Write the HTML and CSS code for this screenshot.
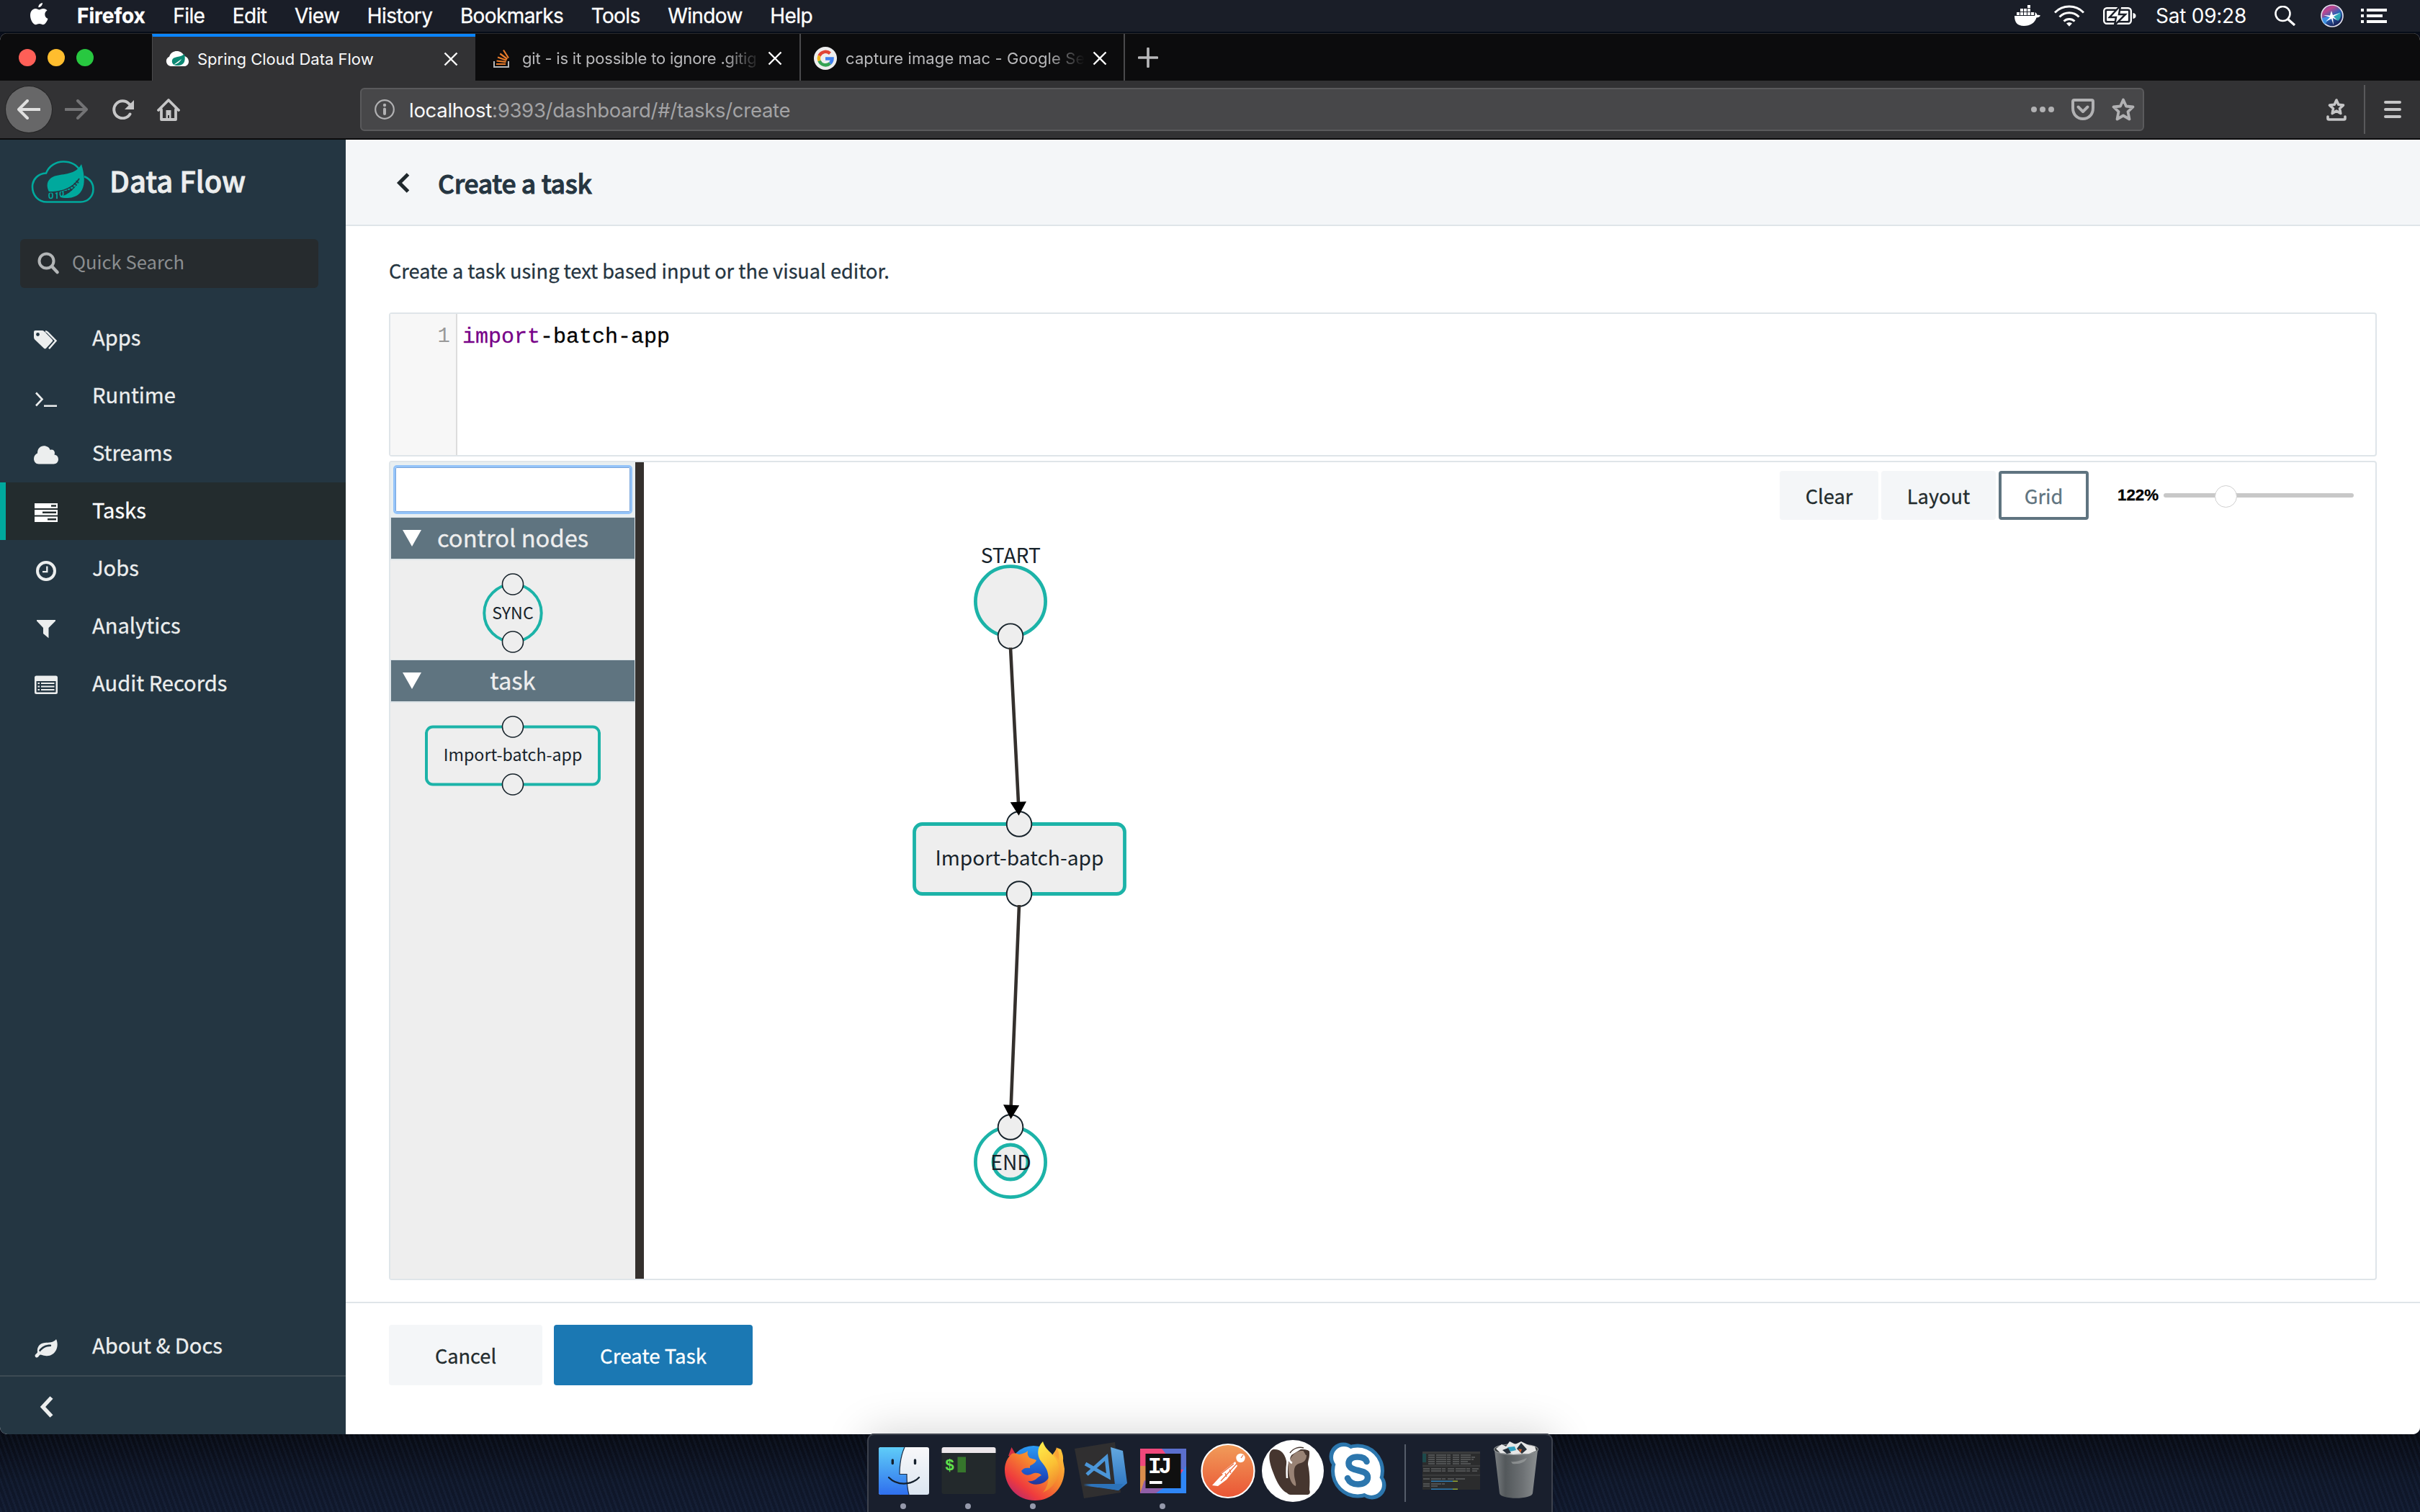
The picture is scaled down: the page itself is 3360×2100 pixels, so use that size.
FILE: index.html
```html
<!DOCTYPE html>
<html lang="en">
<head>
<meta charset="utf-8">
<title>Spring Cloud Data Flow</title>
<link rel="stylesheet" href="styles.css">
</head>
<body>
<header class="menubar">
  <svg class="apple" width="28" height="34" viewBox="0 0 28 34"><path fill="#fff" d="M19 1c.2 3-2.600 6.300-5.600 6.200C13 4.200 16 1.300 19 1zM25.500 11.500c-2 1.300-3.200 3-3.200 5.500 0 2.900 1.700 5 4.200 6-1 3.200-3.700 8.300-6.800 8.300-1.900 0-2.600-1.200-5-1.200s-3.200 1.200-5 1.200C5.800 31.300 2 24 2 18.200 2 12.500 5.500 9 9.300 9c2.200 0 3.800 1.400 5.200 1.400 1.300 0 3.300-1.500 5.900-1.400 2 .1 4 1 5.100 2.500z"/></svg>
  <nav class="menus">
    <b>Firefox</b><span>File</span><span>Edit</span><span>View</span><span>History</span><span>Bookmarks</span><span>Tools</span><span>Window</span><span>Help</span>
  </nav>
  <div class="status">
    <svg class="s-docker" width="36" height="30" viewBox="0 0 36 30"><path fill="#fff" d="M0 15h28c1-1.500.5-4 .3-5 2 .6 3 2.500 3.200 4 1.500-.3 3-.2 4.500.5-1 2-3 3-5.500 3C28 25 22 29 13 29 4 29 0 24 0 15zM3 10h4v4H3zM8 10h4v4H8zM13 10h4v4h-4zM18 10h4v4h-4zM23 10h4v4h-4zM8 5h4v4H8zM13 5h4v4h-4zM18 5h4v4h-4zM18 0h4v4h-4z"/></svg>
    <svg class="s-wifi" width="42" height="30" viewBox="0 0 42 30"><g fill="none" stroke="#fff" stroke-width="3"><path d="M1 10.500a28 28 0 0 1 40 0"/><path d="M7.500 16.500a19 19 0 0 1 27 0"/><path d="M13.500 22.500a11 11 0 0 1 15 0"/></g><path fill="#fff" d="M17 25.500a6 6 0 0 1 8 0l-4 4.300z"/></svg>
    <svg class="s-batt" width="46" height="26" viewBox="0 0 46 26"><rect x="1.200" y="2.200" width="37.600" height="21.600" rx="4" fill="none" stroke="#fff" stroke-width="2.400"/><rect x="5" y="6" width="30" height="14" rx="1" fill="#fff"/><path fill="#fff" d="M41.500 9c3 .5 4 2 4 4s-1 3.500-4 4z"/><path d="M23 0 9 15h9l-2 11 15-15h-9l2-11z" fill="#fff" stroke="#1a1e28" stroke-width="2.500"/></svg>
    <span class="clock">Sat 09:28</span>
    <svg class="s-find" width="30" height="28" viewBox="0 0 30 28"><circle cx="11.500" cy="11" r="10" fill="none" stroke="#fff" stroke-width="2.600"/><path d="M18.500 18.500 28 27" stroke="#fff" stroke-width="3.200"/></svg>
    <svg class="s-siri" width="32" height="32" viewBox="0 0 32 32"><defs><linearGradient id="siri" x1="0" y1="0" x2=".6" y2="1"><stop offset="0" stop-color="#6b4bb0"/><stop offset=".3" stop-color="#c0468e"/><stop offset=".6" stop-color="#2a62b8"/><stop offset="1" stop-color="#171d50"/></linearGradient></defs><circle cx="16" cy="16" r="15" fill="url(#siri)" stroke="#e4e2ee" stroke-width="1.600"/><path fill="#2fc4c0" opacity=".75" d="M16 17 27 11c2 5 0 10-3 12z"/><path fill="#3c9ef0" d="m15 16-9 12c-3-3-4-6-4-9z" opacity=".75"/><path fill="#fff" d="m15 9 2 6 10-3-9 5 5 5-6-3 1 10-3-9-8 4 6-6-9-3 9 .5z"/></svg>
    <svg class="s-list" width="36" height="20" viewBox="0 0 36 20"><path fill="#fff" d="M0 0h4v4H0zM8 0h28v4H8zM0 8h4v4H0zM8 8h22v4H8zM0 16h4v4H0zM8 16h28v4H8z"/></svg>
  </div>
</header>

<div class="window">
  <div class="tabs">
    <div class="lights"><i class="red"></i><i class="yellow"></i><i class="green"></i></div>
    <div class="tab active">
      <svg class="fav" width="32" height="22" viewBox="0 0 32 22"><path fill="#fff" d="M7 21a7 7 0 0 1-2-13.300C7 2 11 0 15.500 0 20 0 24 2.500 25.500 6.500 30 8 32 11 32 14.500c0 4-3 6.500-6 6.500z"/><path fill="#0b8873" d="M26 4c2 9 0 15.500-8 16-7 .5-10-3-9-7.500C10 7 21 9 26 4zM11 19c5-1 9-4 11-8"/></svg>
      <span class="title">Spring Cloud Data Flow</span>
      <svg class="x" width="20" height="20" viewBox="0 0 20 20"><path d="m1.500 1.500 17 17m0-17-17 17"/></svg>
    </div>
    <div class="tab git">
      <svg class="fav" width="22" height="26" viewBox="0 0 22 26"><path fill="none" stroke="#b5b7b9" stroke-width="2" d="M1 17v8h20v-8"/><path stroke="#e87b2a" stroke-width="2.200" d="M4 21h13M4.500 16.500l13 1.600M6 11.500l12.300 4.200M9.300 6.500l10 7.500M14 1.500l7 11"/></svg>
      <span class="title">git - is it possible to ignore .gitig</span>
      <svg class="x" width="20" height="20" viewBox="0 0 20 20"><path d="m1.500 1.500 17 17m0-17-17 17"/></svg>
    </div>
    <div class="tab goog">
      <svg class="fav" width="32" height="32" viewBox="0 0 32 32"><circle cx="16" cy="16" r="16" fill="#eee"/><g fill="none" stroke-width="4.500"><path stroke="#e04435" d="M7.500 12.500A9.500 9.500 0 0 1 22.500 9.300"/><path stroke="#efb31a" d="M7.500 19.500a9.500 9.500 0 0 1 0-7"/><path stroke="#34a353" d="M22.500 23a9.500 9.500 0 0 1-15-3.500"/><path stroke="#4080ee" d="M22.500 23a9 9 0 0 0 3-6.500H16"/></g></svg>
      <span class="title">capture image mac - Google Se</span>
      <svg class="x" width="20" height="20" viewBox="0 0 20 20"><path d="m1.500 1.500 17 17m0-17-17 17"/></svg>
    </div>
    <svg class="plus" width="28" height="28" viewBox="0 0 28 28"><path d="M14 1.500v25M1.500 14h25"/></svg>
  </div>

  <div class="toolbar">
    <span class="back"><svg width="32" height="28" viewBox="0 0 32 28"><path d="M31 14H3M14 2 2 14l12 12"/></svg></span>
    <svg class="fwd" width="32" height="28" viewBox="0 0 32 28"><path d="M1 14h28M18 2l12 12-12 12"/></svg>
    <svg class="reload" width="31" height="28" viewBox="0 0 31 28"><path fill="none" stroke="#c6c6c7" stroke-width="4" stroke-linecap="round" d="M24.500 20.500A12 12 0 1 1 23 6l4 4"/><path fill="#c6c6c7" d="M30 1v13H17z"/></svg>
    <svg class="home" width="32" height="32" viewBox="0 0 32 32"><path fill="none" stroke="#c6c6c7" stroke-width="3.800" stroke-linejoin="round" stroke-linecap="round" d="M2 17 16 3l14 14M6 16v14h20V16"/><path fill="#c6c6c7" d="M12.500 17h7v13h-2.500v-6h-2v6h-2.500z"/></svg>
    <div class="url">
      <svg width="28" height="28" viewBox="0 0 28 28"><circle cx="14" cy="14" r="12.800" fill="none" stroke="#b1b1b3" stroke-width="2.200"/><circle cx="14" cy="8" r="2.200" fill="#b1b1b3"/><path stroke="#b1b1b3" stroke-width="4" stroke-linecap="round" d="M14 13.500v6.500"/></svg>
      <span class="addr"><em>localhost</em>:9393/dashboard/#/tasks/create</span>
      <svg class="dots" width="32" height="8" viewBox="0 0 32 8"><circle cx="4" cy="4" r="4"/><circle cx="16" cy="4" r="4"/><circle cx="28" cy="4" r="4"/></svg>
      <svg class="pocket" width="32" height="30" viewBox="0 0 32 30"><path d="M4 2h24a2 2 0 0 1 2 2v9c0 9-6 15-14 15S2 22 2 13V4a2 2 0 0 1 2-2z"/><path d="m9.500 11.500 6.500 6.500 6.500-6.500"/></svg>
      <svg class="star" width="32" height="32" viewBox="0 0 32 32"><path d="m16 2.500 4 9 9.500 1-7 6.700 2 10.300-8.500-5-8.500 5 2-10.300-7-6.700 9.500-1z"/></svg>
    </div>
    <svg class="lib" width="28" height="32" viewBox="0 0 28 32"><path d="m14 3 2.800 6.300 6.700.8-5 4.600 1.300 6.800-5.800-3.400-5.800 3.400 1.300-6.800-5-4.600 6.700-.8z"/><path d="M2 26v2.500a1.500 1.500 0 0 0 1.500 1.500h21a1.500 1.500 0 0 0 1.500-1.500V26"/></svg>
    <i class="vsep"></i>
    <svg class="burger" width="24" height="24" viewBox="0 0 24 24"><path d="M2 2h20M2 12h20M2 22h20"/></svg>
  </div>

  <div class="page">
    <aside>
      <div class="brand">
        <svg width="88" height="60" viewBox="0 0 88 60"><path fill="none" stroke="#00a99d" stroke-width="2.600" d="M22 57.500C10 57.500 2 48 2 36.500 2 26 10 18 21 17.500 25 7 35 1.500 45 1.500c11 0 19 5 23.500 13M74 22c8 3.500 12.500 10 12.500 17.500C86.500 50 79 57.500 69 57.500H20"/><path fill="#00a99d" d="M70 5c7 22 6 46-19 47-4 .2-8-.500-11-1.600 13-3 23-13 28-26C59 37 43 43 25 43 20 34 23 25 33 21.500 45 18 62 20 70 5z"/><path fill="#00a99d" d="M24 40c17 0 34-5 44-16-2 6-5 10-9 14-9 5-20 6-34 5z"/><g fill="none" stroke="#00a99d" stroke-width="1.700"><ellipse cx="27.500" cy="48.500" rx="2.500" ry="4"/><path d="m34 46 2-1v8"/><ellipse cx="42.500" cy="46" rx="2.200" ry="3.800"/></g><path fill="none" stroke="#243642" stroke-width="1.500" d="M24 44c19 0 34-5 43-19"/><path fill="none" stroke="#243642" stroke-width="5" stroke-dasharray="1.500 3" d="M47 45c8-4 14-11 18-16"/></svg>
        <h1>Data Flow</h1>
      </div>
      <div class="search"><svg width="32" height="32" viewBox="0 0 32 32"><circle cx="12.500" cy="12.500" r="10" fill="none" stroke="#b3b6b7" stroke-width="4"/><path stroke="#b3b6b7" stroke-width="4.600" stroke-linecap="round" d="m20 20 7.500 8"/></svg><span>Quick Search</span></div>
      <nav class="side">
        <a><svg width="36" height="36" viewBox="0 0 36 36"><path fill="#eceeee" d="M1 9a2 2 0 0 1 2-2h9c1.500 0 3 .7 4 1.700L26.500 19.500c1 1 1 2 0 3L18 31.700c-1 1-2 1-3 0L2.700 20C1.600 19 1 17.700 1 16z"/><circle cx="6.500" cy="12.500" r="2.400" fill="#243642"/><path fill="none" stroke="#eceeee" stroke-width="2.500" d="M17 8.200c1 0 2 .5 3 1.500l11.500 11.500-9.500 11"/></svg><span>Apps</span></a>
        <a><svg width="36" height="36" viewBox="0 0 36 36"><path fill="none" stroke="#eceeee" stroke-width="2.600" d="m4 13.500 8.500 9L4 31.500"/><path fill="#eceeee" d="M15 30.500h18v2.500H15z"/></svg><span>Runtime</span></a>
        <a><svg width="36" height="36" viewBox="0 0 36 36"><path fill="#eceeee" d="M8 32.500c-4.500 0-7-3.500-7-7.500 0-3.500 2-6.300 5-7.500C6 11 10 7.300 15 7.300c4 0 7.500 2.200 8.700 5.700 3-1.500 6.300.5 6.300 4 0 1-.2 1.800-.6 2.600C33 20 35 22.500 35 26c0 3.700-3 6.500-6.500 6.500z"/></svg><span>Streams</span></a>
        <a class="on"><svg width="36" height="36" viewBox="0 0 36 36"><path fill="#fff" d="M2 7h32v7H2zM2 16h32v7.500H2zM2 25.500h32V33H2z"/><path stroke="#232c2e" stroke-width="2.400" d="M25 10.500h7M13 19.800h19M20 29.300h12"/></svg><span>Tasks</span></a>
        <a><svg width="36" height="36" viewBox="0 0 36 36"><circle cx="18" cy="21" r="12" fill="none" stroke="#eceeee" stroke-width="4"/><path fill="none" stroke="#eceeee" stroke-width="2.300" d="M19.300 14.500v7.700H13"/></svg><span>Jobs</span></a>
        <a><svg width="36" height="36" viewBox="0 0 36 36"><path fill="#eceeee" d="M5 9h26v1.500L21.500 20v14.300L14 28v-8L5 10.500z"/></svg><span>Analytics</span></a>
        <a><svg width="36" height="36" viewBox="0 0 36 36"><path fill="#eceeee" fill-rule="evenodd" d="M4.500 6.500h27A2.500 2.500 0 0 1 34 9v20.500a2.500 2.500 0 0 1-2.500 2.500h-27A2.500 2.500 0 0 1 2 29.500V9a2.500 2.500 0 0 1 2.500-2.500zM4.500 14v14.500c0 .6.400 1 1 1h25c.6 0 1-.4 1-1V14z"/><path stroke="#eceeee" stroke-width="2.200" d="M6.500 17h2.500M11 17h18.500M6.500 21.500h2.500M11 21.500h18.500M6.500 26h2.500M11 26h18.500"/></svg><span>Audit Records</span></a>
      </nav>
      <div class="side about"><a><svg width="36" height="36" viewBox="0 0 36 36"><path fill="#eceeee" fill-rule="evenodd" d="M32 8c2 4 2.500 10 0 15-3 6-9 9-15 8-3-.3-5-1.500-7-1.500-1.500 0-2.500 4-5 4C3 33.500 2 31 3 29.500c1-1.200 2.800-2 3-3.500C5 19 9 13.500 16 13c6-.5 12 0 16-5zM9.500 25.500c5-5.500 8-7.300 14.500-7.500 1.600 0 1.600-2.600 0-2.600-7 0-12 2.600-16 8z"/></svg><span>About &amp; Docs</span></a></div>
      <div class="collapse"><svg width="20" height="30" viewBox="0 0 20 30"><path fill="none" stroke="#eceeee" stroke-width="5.500" d="M16.500 2 4.500 15l12 13"/></svg></div>
    </aside>
    <main>
      <div class="head"><svg width="20" height="28" viewBox="0 0 20 28"><path fill="none" stroke="#1f282c" stroke-width="5" d="M16.500 2 4.500 14l12 12"/></svg><h2>Create a task</h2></div>
      <p class="lead">Create a task using text based input or the visual editor.</p>
      <div class="code"><div class="gutter">1</div><pre><span>import</span>-batch-app</pre></div>
      <div class="flo">
        <div class="palette">
          <div class="filter"><div class="field"></div></div>
          <div class="group"><svg width="26" height="23" viewBox="0 0 26 23"><path fill="#fff" d="M0 0h26L13 23z"/></svg><span>control nodes</span></div>
          <svg class="shape" width="340" height="138" viewBox="542 778.500 340 138"><circle cx="712" cy="852" r="39.700" class="node"/><circle cx="712" cy="812" r="14.500" class="port"/><circle cx="712" cy="892" r="14.500" class="port"/><text x="712" y="860.700" class="lbl sm">SYNC</text></svg>
          <div class="group"><svg width="26" height="23" viewBox="0 0 26 23"><path fill="#fff" d="M0 0h26L13 23z"/></svg><span>task</span></div>
          <svg class="shape" width="340" height="138" viewBox="542 976.500 340 138"><rect x="592" y="1010" width="240" height="80" rx="9" class="node"/><circle cx="712" cy="1010" r="14.500" class="port"/><circle cx="712" cy="1090" r="14.500" class="port"/><text x="712" y="1057.700" class="lbl sm">Import-batch-app</text></svg>
        </div>
        <div class="splitter"></div>
        <div class="canvas">
          <svg class="graph" width="1506" height="1134" viewBox="894 642 1506 1134">
            <g class="big"><circle cx="1403" cy="835.300" r="48.600" class="node"/><circle cx="1403" cy="883.700" r="17.300" class="port"/><text x="1403.300" y="782.300" class="lbl">START</text>
            <rect x="1269.500" y="1144.500" width="292" height="97" rx="11" class="node"/><circle cx="1415" cy="1144.500" r="17.300" class="port"/><circle cx="1415" cy="1241.500" r="17.300" class="port"/><text x="1415.500" y="1201.700" class="lbl">Import-batch-app</text>
            <circle cx="1403" cy="1614" r="48.600" class="node hollow"/><circle cx="1403" cy="1614" r="24" class="node"/><circle cx="1403" cy="1565.500" r="17.300" class="port"/><text x="1403.500" y="1624.700" class="lbl">END</text></g>
            <path class="link" d="M1403 899.500 1414 1115M1415 1257 1403.700 1536"/><path d="M1402.700 1114.300 1425 1113.300 1414.500 1132.700zM1393 1534.300 1415.200 1535.300 1403.500 1554.300z"/>
          </svg>
          <div class="tools"><span class="btn clear">Clear</span><span class="btn layout">Layout</span><span class="btn grid">Grid</span><span class="pct">122%</span><span class="slider"><i></i></span></div>
        </div>
      </div>
      <footer><span class="btn cancel">Cancel</span><span class="btn create">Create Task</span></footer>
    </main>
  </div>
</div>

<div class="desk">
  <div class="dock">
    <svg width="952" height="109" viewBox="1204 1991 952 109">
      <defs>
        <linearGradient id="fb" x1="0" y1="0" x2="0" y2="1"><stop offset="0" stop-color="#5fcdf8"/><stop offset="1" stop-color="#2f6fee"/></linearGradient>
        <linearGradient id="fw" x1="0" y1="0" x2="0" y2="1"><stop offset="0" stop-color="#f8f8fa"/><stop offset="1" stop-color="#dbe5f1"/></linearGradient>
        <linearGradient id="ffo" x1="1" y1="0" x2="0.1" y2="1"><stop offset="0" stop-color="#ffcf3a"/><stop offset=".45" stop-color="#f6842e"/><stop offset=".75" stop-color="#ef3b3d"/><stop offset="1" stop-color="#a8217c"/></linearGradient>
        <linearGradient id="ffb" x1="0" y1="0" x2="0" y2="1"><stop offset="0" stop-color="#2b9bf4"/><stop offset=".6" stop-color="#1c50c4"/><stop offset="1" stop-color="#2b1664"/></linearGradient>
        <linearGradient id="ffy" x1="0" y1="0" x2=".3" y2="1"><stop offset="0" stop-color="#fff04c"/><stop offset=".6" stop-color="#fbc034"/><stop offset="1" stop-color="#f28a2f"/></linearGradient>
        <linearGradient id="vs" x1="0" y1="0" x2="0" y2="1"><stop offset="0" stop-color="#63a8df"/><stop offset="1" stop-color="#2a72c0"/></linearGradient>
        <linearGradient id="pm" x1="0" y1="0" x2="0" y2="1"><stop offset="0" stop-color="#f19c5a"/><stop offset="1" stop-color="#ea5535"/></linearGradient>
        <linearGradient id="tr" x1="0" y1="0" x2="1" y2="0"><stop offset="0" stop-color="#7b7f82"/><stop offset=".25" stop-color="#53585b"/><stop offset=".65" stop-color="#6d7174"/><stop offset="1" stop-color="#8b8f91"/></linearGradient>
      </defs>
      <rect x="1220" y="2010" width="70" height="66" rx="3" fill="url(#fw)"/><path fill="url(#fb)" d="M1223 2010h33c-5 11-7 23-7 37.500h10c0 10 .7 20 3 28.500h-39a3 3 0 0 1-3-3v-60a3 3 0 0 1 3-3z"/><path fill="none" stroke="#1b2c44" stroke-width="1.200" d="M1256 2010c-5 11-7 23-7 37.500h10c0 10 .7 20 3 28.500"/><g fill="none" stroke="#14202d" stroke-linecap="round"><path stroke-width="3.400" d="M1239.300 2028v4.500M1270.500 2028v4.500"/><path stroke-width="2.200" d="M1234 2052c11 11.500 31 11.500 42 0"/></g>
      <rect x="1307.500" y="2010" width="75" height="65" rx="3" fill="#23292c"/><path fill="#ece6ea" d="M1310.500 2010h69a3 3 0 0 1 3 3v5h-75v-5a3 3 0 0 1 3-3z"/><text x="1312" y="2042" class="prompt">$</text><rect x="1329.500" y="2023.500" width="11.500" height="21.500" fill="#36762c"/>
      <path fill="#d42f45" d="M1400 2022l4.500-12 8 14z"/><circle cx="1435" cy="2042" r="34" fill="url(#ffb)"/><path fill="url(#ffo)" d="M1405 2019c4-1 7 0 10 1 5-1 9-2 12-5-1 5 0 7 3 10 2 1 5 1 9 3-1 4-6 6-9 8v3c-6-1-9 0-12 4 3 6 9 7 15 4 4-2 10-2 13 2-2 1-4 2-6 4-3 3-8 5-13 4 4 5 13 6 20 3 12-5 14-18 9-32l12-17 5 2c4 10 3 12 3 16l2 11c0 26-17 44-41 44-25 0-42-20-42-43 0-9 4-17 10-22z"/><path fill="url(#ffy)" d="M1448 2002c-6 6-8 13-6 21 2 8 11 12 13 24 2 10-1 19-7 26 14-6 24-20 22-36-2-17-18-20-22-35z"/><path fill="#f9a335" d="M1464 2020l3-10c3 6 4 10 3 18z"/>
      <path fill="#302f30" d="m1492 2012 56-9 8 70-51 8z"/><path fill="url(#vs)" d="m1542 2010 17 5 6 45-12 10-49-7 44-1z"/><path fill="#2c72b8" d="m1504 2061 49 9 6-9z"/><path fill="none" stroke="#4b96d8" stroke-width="5" d="m1507 2033 32 18-3-27-27 24"/>
      <path fill="#f0487b" d="M1583 2012h64v62h-64z"/><path fill="#5b6fce" d="M1613 2012h34v30l-12-2z"/><path fill="#2f86f6" d="M1647 2036v38h-46l30-15z"/><path fill="#d98d4c" d="M1583 2036h10v28l-10 8z"/><path fill="#915fa8" d="m1583 2074 6-18 28 9-12 9z"/><path fill="#101010" d="M1590.500 2019h49v48h-49z"/><text x="1594" y="2046" class="ij">IJ</text><path fill="#fff" d="M1596 2057h17.500v4H1596z"/>
      <ellipse cx="1705" cy="2043" rx="36.500" ry="37" fill="url(#pm)" stroke="#fff" stroke-width="2.200"/><circle cx="1722.500" cy="2025" r="6.200" fill="#fff"/><path fill="#fff" d="m1715 2030 3 6-15 19-12 9-8-1 11-12 4-3-3-2z"/><path stroke="#ec6a40" stroke-width="1.200" d="m1717 2033-22 24m18-24-18 14m12-6 2 5m-8 0 2 5M1723 2025l3-4"/>
      <ellipse cx="1795" cy="2043" rx="43" ry="43" fill="#fff"/><path fill="#46362f" d="M1768 2013c10-1 16 6 18 16 2 12 1 26 2 45-8-3-15-14-20-28-7-17-8-31 0-33z"/><path fill="#46362f" d="M1806 2013c8 0 13 2 12 7 0 6-2 8-2 14 2 9 3 20 2 35 2 5 0 7-4 7h-22c-6 0-7-6-6-14 1-18 0-30 7-41z"/><path fill="#998375" d="M1789 2032c3-9 9-16 17-17 5-.5 8 1 8 6 0 7-4 10-8 11-8 2-10 6-9 18 1 7 3 10 2 14-8-3-11-18-10-32z"/><path fill="#46362f" d="M1809 2014c4-1 8 0 9 2 0 3-2 5-5 5z"/><path fill="none" stroke="#46362f" stroke-width="1.500" d="M1791 2018c5-7 13-9 19-7"/><path fill="none" stroke="#fff" stroke-width="2.500" d="M1791 2021c-4 7-5 18-4 32M1792 2020c-3 5-3 10 2 12"/>
      <circle cx="1865" cy="2023" r="19.500" fill="#2c76ad"/><circle cx="1905" cy="2063" r="19.500" fill="#2c76ad"/><ellipse cx="1885" cy="2043" rx="37" ry="37.500" fill="#2c76ad"/><circle cx="1866" cy="2024" r="15" fill="#fff"/><circle cx="1904" cy="2062" r="15" fill="#fff"/><ellipse cx="1885" cy="2043" rx="32" ry="32.500" fill="#fff"/><path fill="none" stroke="#2c76ad" stroke-width="8.500" stroke-linecap="round" d="M1897.500 2030c-2-6-8-6.500-13-6.500-7 0-12 3.500-12 9 0 13 26.500 6.500 26.500 19.500 0 6-6 9.500-13.500 9.500-8 0-12-3-14.500-8.500"/>
      <path fill="#555c69" d="M1950 2006h2v80h-2z"/>
      <path fill="#2b2c2d" d="M1975 2016h80v53h-80z"/><path fill="#3a3b3c" d="M1975 2016h80v3h-80zM1975 2035h80v2h-80zM1975 2048h80v2h-80z"/><path stroke="#77797a" stroke-width="1.200" stroke-dasharray="9 2 14 1 5 3" d="M1983 2021h60M1983 2024h68M1983 2027h63M1983 2030h55M1983 2033h60M1976 2040h78M1976 2043h75M1976 2054h58M1976 2061h30M1976 2064h20"/><path fill="#1d4a4c" d="M1975 2019h5v12h-5z"/><path fill="#2f7fb8" d="M1987 2056.500h30v1.500h-30zM1987 2067.500h30v1.500h-30z"/><path fill="#93a637" d="M2017 2056.500h7v1.500h-7zM2017 2067.500h7v1.500h-7z"/>
      <path fill="url(#tr)" d="M2075 2014c10 6 50 6 60 0l-7 60c-1 9-45 9-46 0z"/><ellipse cx="2105" cy="2013" rx="30.500" ry="7.500" fill="#35393b" stroke="#8d9193" stroke-width="1.200"/><path fill="#e6e6e6" d="m2077 2012 8-6 6 3 5-7 8 4 8-4 10 5 9 2 2 6-10 4-22 1-18-2z"/><path fill="#33a0c0" d="m2093 2010 10-1 2 5-8 2z"/><path fill="#27303a" d="m2086 2014 8-3 4 7-6 1zM2106 2012l6-8 8 9-7 6z"/><path fill="#c55a2b" d="m2108 2012 5 1-2 5z"/><path fill="#a3a6a7" opacity=".6" d="M2098 2030c8 1 14-2 22-5-2 6-10 9-20 8z"/>
      <g fill="#9599ab"><circle cx="1254" cy="2092" r="4"/><circle cx="1344" cy="2092" r="4"/><circle cx="1434" cy="2092" r="4"/><circle cx="1614" cy="2092" r="4"/></g>
    </svg>
  </div>
</div>
</body>
</html>
```

FILE: styles.css
```css
* { box-sizing: border-box; }
html, body { margin: 0; width: 3360px; height: 2100px; overflow: hidden; }
body { display: flex; flex-direction: column; background: #0a0e1a; font-family: "Noto Sans CJK SC", "Open Sans", sans-serif; }
svg { display: block; flex: none; }

.menubar { height: 46px; flex: none; display: flex; align-items: center; padding: 0 46px 2px 40px; color: #fff; font: 28px/44px Inter, sans-serif; background: linear-gradient(#1a1e28 44px, #060d18 44px); white-space: nowrap; }
.apple { margin: -4px 39px 0 0; }
.menus { display: flex; gap: 38.500px; letter-spacing: -.6px; -webkit-text-stroke: .3px; }
.menus b { font-weight: 700; letter-spacing: 0; }
.status { margin-left: auto; display: flex; align-items: center; }
.s-wifi { margin-left: 19px; }
.s-batt { margin-left: 26px; }
.clock { margin: 0 39px 0 27px; letter-spacing: -.25px; }
.s-siri { margin: 0 24px 0 34px; }

.window { height: 1946px; flex: none; display: flex; flex-direction: column; border-radius: 10px; overflow: hidden; background: #fff; }
.tabs { height: 66px; flex: none; display: flex; align-items: center; background: #0c0c0d; border-top: 1px solid #2a2a2c; font: 22px/60px Inter, sans-serif; color: #b9b9bb; white-space: nowrap; }
.lights { width: 211px; padding-left: 26px; display: flex; gap: 16px; }
.lights i { width: 24px; height: 24px; border-radius: 50%; }
.red { background: #ff5f57; }
.yellow { background: #ffbd2e; }
.green { background: #28c840; }
.tab { height: 65px; display: flex; align-items: center; padding-top: 3px; border-right: 2px solid #4a4a4c; }
.active { width: 449px; padding-left: 18px; border: 0; border-left: 1px solid #4a4a4c; border-top: 4px solid #0a84ff; padding-top: 0; background: #323234; color: #f9f9fa; }
.tab .title { margin-left: 12px; overflow: hidden; }
.active .title { width: 330px; }
.active .x { margin-left: 12px; }
.git { width: 452px; padding-left: 25px; }
.git .title { margin-left: 18px; letter-spacing: -.2px; }
.git .title, .goog .title { width: 332px; margin-right: 9px; mask-image: linear-gradient(90deg, #000 280px, transparent); }
.goog { width: 450px; padding-left: 18px; }
.goog .title { margin-right: 11px; letter-spacing: .1px; }
.x { fill: none; stroke: #fff; stroke-width: 2.4; }
.plus { margin-left: 18px; fill: none; stroke: #b9b9bb; stroke-width: 3.6; stroke-linecap: round; }

.toolbar { height: 82px; flex: none; display: flex; align-items: center; padding: 0 26px 0 8px; background: #323234; border-bottom: 2px solid #0c0c0d; }
.toolbar svg { fill: none; stroke-linecap: round; stroke-linejoin: round; }
.back { width: 64px; height: 64px; border-radius: 50%; background: #676768; display: flex; align-items: center; justify-content: center; box-shadow: 0 0 0 1px #252526; }
.back svg { stroke: #e0e0e0; stroke-width: 4; }
.fwd { margin-left: 18px; stroke: #737375; stroke-width: 4; }
.reload { margin-left: 34px; }
.home { margin-left: 31px; }
.url { margin-left: 250px; width: 2477px; height: 60px; display: flex; align-items: center; padding: 0 11px 0 18px; background: #474749; border: 2px solid #5a5a5c; border-radius: 6px; font: 27.500px/56px Inter, sans-serif; color: #a3a3a5; }
.addr { margin: 0 auto 0 20px; padding-top: 1px; letter-spacing: -.28px; white-space: nowrap; }
.addr em { font-style: normal; color: #f9f9fa; }
.toolbar .dots { fill: #b1b1b3; margin-right: 24px; }
.pocket { stroke: #b1b1b3; stroke-width: 4; margin-right: 24px; }
.star { stroke: #b1b1b3; stroke-width: 3.8; }
.lib { stroke: #c6c6c7; stroke-width: 3.6; margin-left: auto; }
.vsep { width: 2px; height: 68px; background: #59595b; margin: 0 26px 0 24px; }
.burger { stroke: #c6c6c7; stroke-width: 4; }

.page { flex: 1; display: flex; min-height: 0; -webkit-text-stroke: .3px; }
aside { width: 480px; display: flex; flex-direction: column; background: #243642; color: #eceeee; }
.brand { height: 138px; display: flex; align-items: center; padding: 0 0 20px 43px; }
.brand h1 { margin: 0 0 6px 21px; font-size: 40px; line-height: 60px; font-weight: 500; -webkit-text-stroke: .8px; white-space: nowrap; }
.search { height: 68px; width: 414px; margin-left: 28px; padding: 0 0 0 24px; display: flex; align-items: center; gap: 16px; border-radius: 6px; background: #262b2e; color: #8b8e90; font-size: 25.600px; line-height: 40px; white-space: nowrap; -webkit-text-stroke: 0; }
.search span { margin-bottom: 6px; }
nav.side { margin-top: 30px; }
.side a { height: 80px; display: flex; align-items: center; padding-left: 46px; gap: 46px; font-size: 29.100px; line-height: 40px; white-space: nowrap; }
.side a span { margin-bottom: 6px; }
.side .on { background: #232c2e; color: #fff; box-shadow: inset 8px 0 #00a99d; }
.about { margin-top: auto; }
.collapse { height: 82px; border-top: 2px solid #3d4b54; padding: 27px 0 0 55px; }

main { flex: 1; min-width: 0; display: flex; flex-direction: column; background: #fff; color: #253541; }
.head { height: 120px; flex: none; display: flex; align-items: center; padding: 2px 0 0 70px; gap: 38px; background: #f4f6f8; border-bottom: 2px solid #dfe5e9; }
.head h2 { margin: 0; font-size: 35.500px; line-height: 50px; font-weight: 500; letter-spacing: -.3px; -webkit-text-stroke: 1px; white-space: nowrap; }
.lead { margin: 42px 0 0 60px; height: 78px; font-size: 27.150px; line-height: 40px; white-space: nowrap; }
.code { height: 200px; flex: none; margin: 0 60px; display: flex; border: 2px solid #dfe5e9; border-radius: 4px; font: 30px/48px "Liberation Mono", monospace; }
.gutter { width: 93px; background: #f7f7f7; border-right: 2px solid #ddd; padding: 8px 8px 0 0; text-align: right; color: #999; font-size: 29px; -webkit-text-stroke: 0; }
.code pre { margin: 0; padding: 8px 0 0 7px; font: inherit; color: #000; }
.code span { color: #708; }
.flo { height: 1138px; flex: none; margin: 6px 60px 0; display: flex; border: 2px solid #dfe5e9; border-radius: 4px; }
.palette { width: 340px; background: #eee; }
.filter { height: 76px; padding: 4px; background: #e9eff1; }
.field { height: 68px; background: #fff; border: 3px solid #94c4f9; border-radius: 5px; box-shadow: inset 0 0 0 1px #79a5dc; }
.group { height: 60px; display: flex; align-items: center; justify-content: center; position: relative; background: #5f7480; border: 1px solid #dde4e8; border-bottom-width: 2px; font-size: 32.700px; line-height: 48px; color: #eee; }
.group svg { position: absolute; left: 16px; top: 17px; }
.group span { margin-bottom: 3px; white-space: nowrap; }
.splitter { width: 12px; background: #34302d; }
.canvas { flex: 1; position: relative; display: flex; justify-content: flex-end; align-items: flex-start; }
.graph { position: absolute; left: 0; top: 0; }
.node { fill: #eee; stroke: #1cb3a8; stroke-width: 4; }
.big .node { stroke-width: 4.800; }
.big .hollow { fill: #fff; }
.port { fill: #eee; stroke: #17232b; stroke-width: 1.600; }
.big .port { stroke-width: 1.900; }
.lbl { fill: #17232b; font-size: 28.200px; text-anchor: middle; }
.sm { font-size: 23.200px; }
.link { fill: none; stroke: #34302d; stroke-width: 4.600; }
.tools { position: relative; display: flex; align-items: center; height: 68px; margin: 12px 30px 0 0; }
.btn { display: flex; align-items: center; justify-content: center; border-radius: 4px; background: #f4f6f8; color: #232c2e; font-size: 27.200px; line-height: 40px; white-space: nowrap; }
.clear { width: 137px; height: 68px; }
.layout { width: 159px; height: 68px; margin: 0 4px; }
.grid { width: 125px; height: 68px; background: #fff; border: 4px solid #5f7480; color: #5f7480; }
.pct { margin-left: 40px; width: 64px; font: bold 22.300px/30px "Liberation Sans", sans-serif; color: #000; }
.slider { width: 264px; height: 6px; border-radius: 3px; background: #c8c8c8; display: flex; align-items: center; padding-left: 71px; }
.slider i { width: 31px; height: 31px; border-radius: 50%; background: #fff; border: 1px solid #d0d0d0; margin-top: 3px; }
footer { flex: 1; margin-top: 30px; border-top: 2px solid #dfe5e9; padding: 30px 0 0 60px; display: flex; gap: 16px; align-items: flex-start; }
.cancel { width: 213px; height: 84px; }
.create { width: 276px; height: 84px; background: #1b78b3; color: #fff; font-size: 27.700px; }

.desk { height: 108px; display: flex; justify-content: center; background: repeating-linear-gradient(70deg, rgba(40, 60, 90, .12) 0 3px, rgba(0, 0, 0, .1) 3px 7px), linear-gradient(#090c15, #10182b 60%, #121b31); }
.dock { width: 952px; height: 109px; margin-top: -1px; background: #191f2d; border-radius: 10px 10px 0 0; box-shadow: 0 0 60px rgba(0, 0, 0, .18), inset 0 2px #3d424d, inset 2px 0 #3d424d, inset -2px 0 #3d424d; }
.prompt { font: bold 22px "Liberation Mono", monospace; fill: #5fe04b; }
.ij { font: bold 31px "Liberation Mono", monospace; fill: #fff; letter-spacing: -4px; }
```
